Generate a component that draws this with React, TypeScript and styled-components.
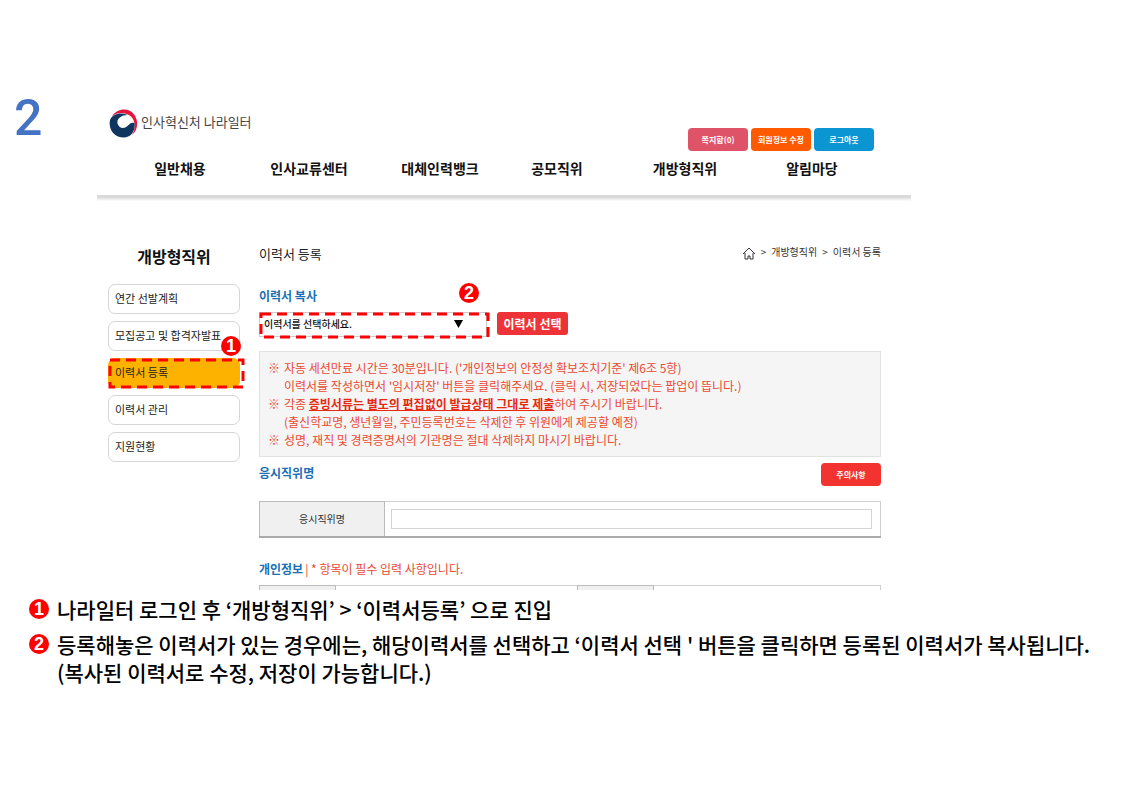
import React from "react";
import styled, { createGlobalStyle } from "styled-components";

const Global = createGlobalStyle`
  * { box-sizing: border-box; }
  body { margin: 0; background: #fff; color: #111; font-family: "Noto Sans CJK KR", sans-serif; }
  h1, h2, h3, p, ul, ol { margin: 0; padding: 0; }
  ul, ol { list-style: none; }
  button, input, select { font-family: inherit; }
`;

const Slide = styled.main`
  padding: 96px 0 40px;
`;
const Stage = styled.div`
  display: grid;
  grid-template-columns: 97px minmax(0, 1fr) 210px;
`;
const SlideNumber = styled.h1`
  padding-left: 14px;
  font: 500 50px/44px Roboto, sans-serif;
  color: #4472c4;
`;
const Screen = styled.section`
  height: 494px;
  overflow: hidden;
`;
const Header = styled.header`
  height: 99px;
  padding: 12px 37px 0 12px;
`;
const TopRow = styled.div`
  display: flex;
  justify-content: space-between;
  height: 44px;
`;
const Brand = styled.a`
  display: flex;
  align-items: center;
  gap: 3px;
  height: 30px;
  color: #444;
  font-size: 13px;
  line-height: 20px;
  text-decoration: none;
`;
const BrandName = styled.span`
  padding-bottom: 2px;
`;
const Utilities = styled.div`
  display: flex;
  gap: 3px;
  padding-top: 20px;
`;
const SmallButton = styled.button<{ $bg: string }>`
  width: 60px;
  height: 23px;
  padding: 0;
  border: 0;
  border-radius: 4px;
  background: ${(p) => p.$bg};
  color: #fff;
  font-size: 8px;
  font-weight: 700;
  line-height: 22px;
`;
const Nav = styled.nav`
  display: grid;
  grid-template-columns: 126fr 132fr 130fr 104fr 152fr 102fr;
  padding: 6px 11px 0 8px;
`;
const NavLink = styled.a`
  color: #111;
  font-size: 14px;
  font-weight: 700;
  line-height: 20px;
  text-align: center;
  text-decoration: none;
`;
const Shade = styled.div`
  height: 6px;
  background: linear-gradient(#dadada, #dadada 40%, #fff);
`;
const Body = styled.div`
  display: grid;
  grid-template-columns: 132px minmax(0, 1fr);
  gap: 19px;
  padding: 43px 30px 0 11px;
`;
const SideTitle = styled.h2`
  font-size: 16px;
  line-height: 24px;
  text-align: center;
  margin-bottom: 16px;
`;
const Menu = styled.ul`
  display: grid;
  gap: 7px;
`;
const MenuItem = styled.li`
  position: relative;
`;
const MenuLink = styled.a<{ $active?: boolean }>`
  display: block;
  height: 30px;
  padding-left: 6px;
  border: 1px solid ${(p) => (p.$active ? "#fdb200" : "#d6d6d6")};
  border-radius: 7px;
  background: ${(p) => (p.$active ? "#fdb200" : "#fff")};
  color: #222;
  font-size: 11px;
  line-height: 26px;
  white-space: nowrap;
  text-decoration: none;
`;
const Marker = styled.span`
  display: inline-flex;
  flex: none;
  align-items: center;
  justify-content: center;
  width: 20px;
  height: 20px;
  border-radius: 50%;
  background: #f00;
  color: #fff;
  font: 700 18px/20px "Liberation Sans", sans-serif;
`;
const FloatingMarker = styled(Marker)<{ $top: number; $right: number }>`
  position: absolute;
  top: ${(p) => p.$top}px;
  right: ${(p) => p.$right}px;
`;
const Highlight = styled.svg<{ $right: number }>`
  position: absolute;
  top: 0;
  left: 0;
  width: calc(100% + ${(p) => p.$right}px);
  height: 100%;
  overflow: visible;
  pointer-events: none;
`;
const TitleRow = styled.div`
  display: flex;
  justify-content: space-between;
  align-items: flex-start;
  height: 20px;
  line-height: 20px;
`;
const PageTitle = styled.h2`
  font-size: 13px;
  font-weight: 400;
  color: #222;
`;
const Crumbs = styled.nav`
  display: flex;
  align-items: center;
  gap: 5px;
  height: 16px;
  color: #333;
  font-size: 10px;
  a { color: inherit; text-decoration: none; }
  svg { display: block; margin-top: 3px; }
`;
const SectionTitle = styled.h3`
  color: #1a6fb5;
  font-size: 12px;
  line-height: 20px;
`;
const CopyTitle = styled(SectionTitle)`
  margin-top: 22px;
`;
const CopyRow = styled.div`
  display: flex;
  gap: 10px;
  margin-top: 6px;
`;
const SelectWrap = styled.div`
  position: relative;
  width: 228px;
  height: 25px;
`;
const Select = styled.select`
  appearance: none;
  display: block;
  width: 100%;
  height: 25px;
  padding: 0 4px 2px;
  border: 1px solid #ccc;
  background: #fff;
  color: #111;
  font-size: 10px;
  font-weight: 500;
`;
const Arrow = styled.svg`
  position: absolute;
  top: 8px;
  right: 24px;
  pointer-events: none;
`;
const PickButton = styled.button`
  width: 71px;
  height: 23px;
  padding: 0;
  border: 0;
  border-radius: 3px;
  background: #ee3338;
  color: #fff;
  font-size: 12px;
  font-weight: 700;
  line-height: 22px;
`;
const Notice = styled.ul`
  margin-top: 14px;
  padding: 7px 8px;
  border: 1px solid #e2e2e2;
  background: #f5f5f5;
  color: #ea4a33;
  font-size: 12px;
  line-height: 18px;
  white-space: nowrap;
`;
const NoticeItem = styled.li`
  display: grid;
  grid-template-columns: 16px 1fr;
`;
const Strong = styled.strong`
  color: #e8280f;
  text-decoration: underline;
`;
const SectionRow = styled.div`
  display: flex;
  justify-content: space-between;
  align-items: flex-start;
  height: 38px;
  margin-top: 6px;
`;
const Table = styled.table`
  width: 100%;
  border-collapse: collapse;
  border: 1px solid #d0d0d0;
  table-layout: fixed;
`;
const PositionTable = styled(Table)`
  border-bottom: 2px solid #aaa;
`;
const Th = styled.th<{ $width: number }>`
  width: ${(p) => p.$width}px;
  height: 35px;
  padding: 0;
  border: 1px solid #bbb;
  background: #f0f0f0;
  color: #333;
  font-size: 10px;
  font-weight: 400;
`;
const Td = styled.td<{ $width?: string }>`
  width: ${(p) => p.$width ?? "auto"};
  padding: 0 8px 0 6px;
`;
const Field = styled.input`
  display: block;
  width: 100%;
  height: 20px;
  border: 1px solid #d4d4d4;
  background: #fff;
  font-size: 10px;
`;
const PersonalRow = styled.div`
  display: flex;
  align-items: center;
  gap: 2px;
  margin: 21px 0 6px;
`;
const Required = styled.p`
  color: #ea4a33;
  font-size: 12px;
  line-height: 20px;
`;
const Notes = styled.ol`
  padding: 5px 0 0 29px;
  font-size: 21px;
  font-weight: 500;
  color: #000;
`;
const Note = styled.li`
  display: flex;
  gap: 8px;
  margin-bottom: 7px;
  line-height: 28px;
  white-space: nowrap;
  ${Marker} { margin-top: 4px; }
`;

const Dashes = ({ height, right }: { height: number; right: number }) => (
  <Highlight $right={right} aria-hidden="true">
    <rect x="2" y="2" width="100%" height={height} fill="none" stroke="#f00" strokeWidth="3" strokeDasharray="10 6" />
  </Highlight>
);

const Emblem = () => (
  <svg width="29" height="29" viewBox="0 0 58 58" aria-hidden="true">
    <path d="M6 15C16-2 40-4 51 12c9 14 6 30-5 40 7-12 8-27-2-37C34 6 17 5 6 15Z" fill="#e4143c" />
    <path d="M2 22C7 10 23 6 37 12 24 12 15 20 17 29c2 9 13 12 20 5 5-6 9-8 14-6 2 15-6 28-20 29C12 58-2 42 2 22Z" fill="#10355f" />
  </svg>
);

const Home = () => (
  <svg width="14" height="13" viewBox="0 0 14 13" fill="none" stroke="#333" aria-hidden="true">
    <path d="M1 7 7 1l6 6M3 6v6h3V9h2v3h3V6" />
  </svg>
);

const navItems = ["일반채용", "인사교류센터", "대체인력뱅크", "공모직위", "개방형직위", "알림마당"];
const menuItems = ["연간 선발계획", "모집공고 및 합격자발표", "이력서 등록", "이력서 관리", "지원현황"];

export default function App() {
  return (
    <Slide>
      <Global />
      <Stage>
        <SlideNumber>2</SlideNumber>
        <Screen>
          <Header>
            <TopRow>
              <Brand href="#"><Emblem /><BrandName>인사혁신처 나라일터</BrandName></Brand>
              <Utilities>
                <SmallButton $bg="#df5368">쪽지함(0)</SmallButton>
                <SmallButton $bg="#ff5a00">회원정보 수정</SmallButton>
                <SmallButton $bg="#0b95d3">로그아웃</SmallButton>
              </Utilities>
            </TopRow>
            <Nav>{navItems.map((t) => <NavLink href="#" key={t}>{t}</NavLink>)}</Nav>
          </Header>
          <Shade />
          <Body>
            <aside>
              <SideTitle>개방형직위</SideTitle>
              <Menu>
                {menuItems.map((t, i) => (
                  <MenuItem key={t}>
                    <MenuLink href="#" $active={i === 2}>{t}</MenuLink>
                    {i === 2 && <><Dashes height={27} right={1} /><FloatingMarker $top={-22} $right={-1}>1</FloatingMarker></>}
                  </MenuItem>
                ))}
              </Menu>
            </aside>
            <div>
              <TitleRow>
                <PageTitle>이력서 등록</PageTitle>
                <Crumbs>
                  <Home /><span>&gt;</span><a href="#">개방형직위</a><span>&gt;</span><a href="#">이력서 등록</a>
                </Crumbs>
              </TitleRow>
              <CopyTitle><label htmlFor="resume">이력서 복사</label></CopyTitle>
              <CopyRow>
                <SelectWrap>
                  <Select id="resume"><option>이력서를 선택하세요.</option></Select>
                  <Arrow width="9" height="8" viewBox="0 0 9 8" aria-hidden="true"><path d="M0 0h9L4.500 8Z" /></Arrow>
                  <Dashes height={23} right={-1} />
                  <FloatingMarker $top={-29} $right={8}>2</FloatingMarker>
                </SelectWrap>
                <PickButton>이력서 선택</PickButton>
              </CopyRow>
              <Notice>
                <NoticeItem><span>※</span><p>자동 세션만료 시간은 30분입니다. ('개인정보의 안정성 확보조치기준' 제6조 5항)<br />이력서를 작성하면서 '임시저장' 버튼을 클릭해주세요. (클릭 시, 저장되었다는 팝업이 뜹니다.)</p></NoticeItem>
                <NoticeItem><span>※</span><p>각종 <Strong>증빙서류는 별도의 편집없이 발급상태 그대로 제출</Strong>하여 주시기 바랍니다.<br />(출신학교명, 생년월일, 주민등록번호는 삭제한 후 위원에게 제공할 예정)</p></NoticeItem>
                <NoticeItem><span>※</span><p>성명, 재직 및 경력증명서의 기관명은 절대 삭제하지 마시기 바랍니다.</p></NoticeItem>
              </Notice>
              <SectionRow>
                <SectionTitle>응시직위명</SectionTitle>
                <SmallButton $bg="#f2332f">주의사항</SmallButton>
              </SectionRow>
              <PositionTable>
                <tbody>
                  <tr>
                    <Th $width={125} scope="row"><label htmlFor="position">응시직위명</label></Th>
                    <Td><Field id="position" type="text" /></Td>
                  </tr>
                </tbody>
              </PositionTable>
              <PersonalRow>
                <SectionTitle>개인정보</SectionTitle>
                <Required>| * 항목이 필수 입력 사항입니다.</Required>
              </PersonalRow>
              <Table>
                <tbody>
                  <tr><Th $width={76} /><Td $width="39%" /><Th $width={76} /><Td /></tr>
                </tbody>
              </Table>
            </div>
          </Body>
        </Screen>
      </Stage>
      <Notes>
        <Note><Marker>1</Marker><p>나라일터 로그인 후 ‘개방형직위’ &gt; ‘이력서등록’ 으로 진입</p></Note>
        <Note><Marker>2</Marker><p>등록해놓은 이력서가 있는 경우에는, 해당이력서를 선택하고 ‘이력서 선택 ' 버튼을 클릭하면 등록된 이력서가 복사됩니다.<br />(복사된 이력서로 수정, 저장이 가능합니다.)</p></Note>
      </Notes>
    </Slide>
  );
}
